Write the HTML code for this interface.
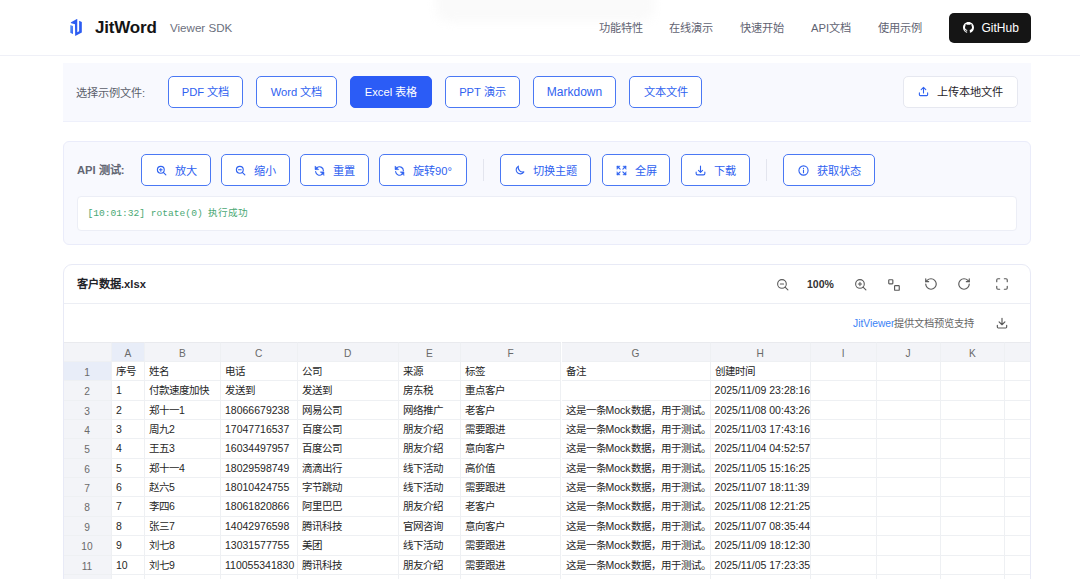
<!DOCTYPE html><html lang="zh-CN"><head><meta charset="utf-8"><style>
*{box-sizing:border-box;margin:0;padding:0}
html,body{width:1080px;height:579px;overflow:hidden;background:#fff;font-family:"Liberation Sans",sans-serif;color:#1f2329}
.a{position:absolute;white-space:nowrap}
#hdr{position:absolute;left:0;top:0;width:1080px;height:56px;border-bottom:1px solid #eff0f7;background:#fff}
.logo-t{left:95px;top:18px;font-size:17px;font-weight:bold;color:#141414;letter-spacing:-0.2px}
.logo-s{left:170px;top:20.5px;font-size:11.6px;color:#6b6f7d}
.nav{top:19.1px;font-size:11.2px;color:#5f6372}
.gh{left:949px;top:13px;width:82px;height:29.5px;background:#151515;border-radius:5px;color:#fff;font-size:12px}
.p1{left:63px;top:63px;width:968px;height:58.5px;background:#f8f9fe;border-bottom:1px solid #eef0fb}
.lbl{font-size:11.2px;color:#5b5f6b}
.btn{position:absolute;height:32px;border:1px solid #4a78f4;border-radius:5px;background:#fff;color:#2f62f0;font-size:11.2px;white-space:nowrap;display:flex;align-items:center;justify-content:center;padding-bottom:0.5px}
.btn span{position:relative}
.btn.on{background:#2b5cf6;color:#fff;border-color:#2b5cf6}
.btn svg{position:relative;flex:none}
.p2{left:63px;top:141px;width:968px;height:104px;background:#f8f9fe;border:1px solid #eaecfa;border-radius:6px}
.log{left:77px;top:196px;width:940px;height:35px;background:#fff;border:1px solid #eceef6;border-radius:4px}
.logt{left:87.5px;top:204.5px;font-family:"Liberation Mono",monospace;font-size:9.6px;color:#4aa874}
.sep{width:1px;height:22px;background:#e3e5ee}
.p3{left:63px;top:264px;width:968px;height:340px;background:#fff;border:1px solid #e8eaf6;border-radius:9px;overflow:hidden}
.ttl{left:77px;top:275px;font-size:11.2px;font-weight:bold;color:#1f2329}
.tb svg{position:absolute}
.grid{position:absolute;left:0;top:0}
.c{position:absolute;height:19.4px;border-right:1px solid #eef0f3;border-bottom:1px solid #eef0f3;font-size:10.5px;color:#262626;line-height:19px;padding-left:4px;overflow:hidden;white-space:nowrap}
.h{background:#f3f4f8;color:#6a6a6a;text-align:center;padding-left:0;font-size:10.2px}
.sel{background:#e8edf8}
</style></head><body>
<div id="hdr">
<svg class="a" style="left:64px;top:14px" width="24" height="24" viewBox="0 0 24 24">
<defs><linearGradient id="lg" x1="0" y1="0" x2="1" y2="0.6"><stop offset="0" stop-color="#6aa6f8"/><stop offset="1" stop-color="#2d5cf2"/></linearGradient></defs>
<polygon fill="url(#lg)" points="6.22,10.98 8.91,12.02 8.91,20.1 6.22,18.65"/>
<polygon fill="#2c5cf2" points="6.63,8.5 12.85,4.97 13.26,4.97 13.26,18.24 15.13,17.2 15.13,6.84 17.82,8.08 17.82,18.45 11.19,21.97 10.98,10.36 7.25,9.33"/>
</svg>
<div class="a" style="left:436px;top:-14px;width:218px;height:36px;border-radius:14px;background:#fafafa;filter:blur(5px)"></div>
<div class="a logo-t">JitWord</div><div class="a logo-s">Viewer SDK</div>
<div class="a nav" style="left:599px">功能特性</div>
<div class="a nav" style="left:669px">在线演示</div>
<div class="a nav" style="left:740px">快速开始</div>
<div class="a nav" style="left:811px">API文档</div>
<div class="a nav" style="left:878px">使用示例</div>
<div class="a gh"><svg class="a" style="left:13.5px;top:9px" width="11" height="11" viewBox="0 0 16 16"><path fill="#fff" d="M8 0C3.58 0 0 3.58 0 8c0 3.54 2.29 6.53 5.47 7.59.4.07.55-.17.55-.38 0-.19-.01-.82-.01-1.49-2.01.37-2.53-.49-2.69-.94-.09-.23-.48-.94-.82-1.13-.28-.15-.68-.52-.01-.53.63-.01 1.08.58 1.230.82.72 1.21 1.87.87 2.33.66.07-.52.28-.87.51-1.07-1.78-.2-3.64-.89-3.64-3.95 0-.87.31-1.59.82-2.15-.08-.2-.36-1.02.08-2.12 0 0 .67-.21 2.2.82.64-.18 1.32-.27 2-.27.68 0 1.36.09 2 .27 1.53-1.04 2.2-.82 2.2-.82.44 1.1.16 1.92.08 2.12.51.56.82 1.27.82 2.15 0 3.07-1.87 3.75-3.65 3.95.29.25.54.73.54 1.48 0 1.07-.01 1.93-.01 2.2 0 .21.15.46.55.38A8.013 8.013 0 0016 8c0-4.42-3.58-8-8-8z"/></svg><span class="a" style="left:32.5px;top:7.5px">GitHub</span></div>
</div>
<div class="a p1"></div>
<div class="a lbl" style="left:76px;top:84.3px">选择示例文件:</div>
<div class="btn " style="left:168px;top:76px;width:75px;height:32px;padding-bottom:1.7px;"><span>PDF 文档</span></div>
<div class="btn " style="left:256px;top:76px;width:81px;height:32px;padding-bottom:1.7px;"><span>Word 文档</span></div>
<div class="btn on" style="left:350px;top:76px;width:82px;height:32px;padding-bottom:1.7px;"><span>Excel 表格</span></div>
<div class="btn " style="left:445px;top:76px;width:75px;height:32px;padding-bottom:1.7px;"><span>PPT 演示</span></div>
<div class="btn " style="left:533px;top:76px;width:83px;height:32px;padding-bottom:0px;font-size:12px"><span>Markdown</span></div>
<div class="btn " style="left:629px;top:76px;width:73px;height:32px;padding-bottom:1.7px;"><span>文本文件</span></div>
<div class="btn " style="left:903px;top:76px;width:115px;height:32px;padding-bottom:1.2px;border-color:#e6e8f0;color:#1f2329"><svg style="margin-right:8px;top:0px" width="11" height="11" viewBox="0 0 24 24" fill="none" stroke="#2f62f0" stroke-width="2.4" stroke-linecap="round" stroke-linejoin="round"><path d="M12 15V3M7 8l5-5 5 5M3 15v4a2 2 0 0 0 2 2h14a2 2 0 0 0 2-2v-4"/></svg><span>上传本地文件</span></div>
<div class="a p2"></div>
<div class="a lbl" style="left:77px;top:161px;font-weight:bold;color:#626673">API 测试:</div>
<div class="btn " style="left:141px;top:154px;width:70px;height:32px;padding-bottom:0.5px;"><svg style="margin-right:8px;top:0.5px" width="11" height="11" viewBox="0 0 24 24" fill="none" stroke="#2f62f0" stroke-width="2.4" stroke-linecap="round" stroke-linejoin="round" ><circle cx="10.5" cy="10.5" r="7.5"/><path d="M21.5 21.5l-5.6-5.6"/><path d="M10.5 7.5v6M7.5 10.5h6"/></svg><span>放大</span></div>
<div class="btn " style="left:221px;top:154px;width:69px;height:32px;padding-bottom:0.5px;"><svg style="margin-right:8px;top:0.5px" width="11" height="11" viewBox="0 0 24 24" fill="none" stroke="#2f62f0" stroke-width="2.4" stroke-linecap="round" stroke-linejoin="round" ><circle cx="10.5" cy="10.5" r="7.5"/><path d="M21.5 21.5l-5.6-5.6"/><path d="M7.5 10.5h6"/></svg><span>缩小</span></div>
<div class="btn " style="left:300px;top:154px;width:69px;height:32px;padding-bottom:0.5px;"><svg style="margin-right:8px;top:0.5px" width="11" height="11" viewBox="0 0 24 24" fill="none" stroke="#2f62f0" stroke-width="2.4" stroke-linecap="round" stroke-linejoin="round" ><path d="M20.5 12.5A8.5 8.5 0 0 0 6.2 6.2L3.5 9"/><path d="M2.5 3v7h7z" fill="#2f62f0" stroke-width="1.5"/><path d="M3.5 14.5A8.5 8.5 0 0 0 17.8 19.8L20.5 17"/><path d="M21.5 22v-7h-7z" fill="#2f62f0" stroke-width="1.5"/></svg><span>重置</span></div>
<div class="btn " style="left:379px;top:154px;width:88px;height:32px;padding-bottom:0.5px;"><svg style="margin-right:8px;top:0.5px" width="11" height="11" viewBox="0 0 24 24" fill="none" stroke="#2f62f0" stroke-width="2.4" stroke-linecap="round" stroke-linejoin="round" ><path d="M20.5 12.5A8.5 8.5 0 0 0 6.2 6.2L3.5 9"/><path d="M2.5 3v7h7z" fill="#2f62f0" stroke-width="1.5"/><path d="M3.5 14.5A8.5 8.5 0 0 0 17.8 19.8L20.5 17"/><path d="M21.5 22v-7h-7z" fill="#2f62f0" stroke-width="1.5"/></svg><span>旋转90°</span></div>
<div class="a sep" style="left:483px;top:159px"></div>
<div class="btn " style="left:500px;top:154px;width:91px;height:32px;padding-bottom:0.5px;"><svg style="margin-right:8px;top:0.5px" width="11" height="11" viewBox="0 0 24 24" fill="none" stroke="#2f62f0" stroke-width="2.4" stroke-linecap="round" stroke-linejoin="round" ><path d="M9.5 2.5A9 9 0 1 0 21.5 15 10 10 0 0 1 9.5 2.5z"/></svg><span>切换主题</span></div>
<div class="btn " style="left:602px;top:154px;width:68px;height:32px;padding-bottom:0.5px;"><svg style="margin-right:8px;top:0.5px" width="11" height="11" viewBox="0 0 24 24" fill="none" stroke="#2f62f0" stroke-width="2.4" stroke-linecap="round" stroke-linejoin="round" ><path d="M3 3l6 6" /><path d="M2.5 2.5h6.5l-6.5 6.5z" fill="#2f62f0" stroke-width="1"/><path d="M21 3l-6 6"/><path d="M21.5 2.5h-6.5l6.5 6.5z" fill="#2f62f0" stroke-width="1"/><path d="M3 21l6-6"/><path d="M2.5 21.5h6.5l-6.5-6.5z" fill="#2f62f0" stroke-width="1"/><path d="M21 21l-6-6"/><path d="M21.5 21.5h-6.5l6.5-6.5z" fill="#2f62f0" stroke-width="1"/></svg><span>全屏</span></div>
<div class="btn " style="left:681px;top:154px;width:69px;height:32px;padding-bottom:0.5px;"><svg style="margin-right:8px;top:0.5px" width="11" height="11" viewBox="0 0 24 24" fill="none" stroke="#2f62f0" stroke-width="2.4" stroke-linecap="round" stroke-linejoin="round" ><path d="M12 2.5v13M7.5 11.5l4.5 4.5 4.5-4.5"/><path d="M2.5 15.5v3a3 3 0 0 0 3 3h13a3 3 0 0 0 3-3v-3"/></svg><span>下载</span></div>
<div class="a sep" style="left:766px;top:159px"></div>
<div class="btn " style="left:783px;top:154px;width:92px;height:32px;padding-bottom:0.5px;"><svg style="margin-right:8px;top:0.5px" width="11" height="11" viewBox="0 0 24 24" fill="none" stroke="#2f62f0" stroke-width="2.4" stroke-linecap="round" stroke-linejoin="round" ><circle cx="12" cy="12" r="10"/><path d="M12 11v6"/><path d="M12 7.3v.4"/></svg><span>获取状态</span></div>
<div class="a log"></div>
<div class="a logt">[10:01:32] rotate(0) 执行成功</div>
<div class="a p3">
</div>
<div class="a ttl">客户数据.xlsx</div>
<svg class="a" style="left:775.5px;top:277.5px" width="13" height="13" viewBox="0 0 24 24" fill="none" stroke="#5a5a5a" stroke-width="2" stroke-linecap="round" stroke-linejoin="round"><circle cx="11" cy="11" r="8"/><path d="M22 22l-5.3-5.3M8 11h6"/></svg>
<div class="a" style="left:807px;top:278px;font-size:10.5px;font-weight:bold;color:#333">100%</div>
<svg class="a" style="left:853.5px;top:277.5px" width="13" height="13" viewBox="0 0 24 24" fill="none" stroke="#5a5a5a" stroke-width="2" stroke-linecap="round" stroke-linejoin="round"><circle cx="11" cy="11" r="8"/><path d="M22 22l-5.3-5.3M8 11h6M11 8v6"/></svg>
<svg class="a" style="left:886.5px;top:277.5px" width="14" height="14" viewBox="0 0 24 24" fill="none" stroke="#5a5a5a" stroke-width="2" stroke-linecap="round" stroke-linejoin="round"><rect x="3" y="3" width="7" height="7" rx="1"/><rect x="13" y="13" width="8" height="8" rx="1"/></svg>
<svg class="a" style="left:924px;top:277px" width="14" height="14" viewBox="0 0 24 24" fill="none" stroke="#5a5a5a" stroke-width="2" stroke-linecap="round" stroke-linejoin="round"><path d="M3 12a9 9 0 1 0 9-9 9.75 9.75 0 0 0-6.74 2.74L3 8"/><path d="M3 3v5h5"/></svg>
<svg class="a" style="left:957px;top:277px" width="14" height="14" viewBox="0 0 24 24" fill="none" stroke="#5a5a5a" stroke-width="2" stroke-linecap="round" stroke-linejoin="round"><path d="M21 12a9 9 0 1 1-9-9c2.52 0 4.93 1 6.74 2.74L21 8"/><path d="M21 3v5h-5"/></svg>
<svg class="a" style="left:995px;top:277px" width="14" height="14" viewBox="0 0 24 24" fill="none" stroke="#5a5a5a" stroke-width="2" stroke-linecap="round" stroke-linejoin="round"><path d="M8 3H5a2 2 0 0 0-2 2v3M21 8V5a2 2 0 0 0-2-2h-3M3 16v3a2 2 0 0 0 2 2h3M16 21h3a2 2 0 0 0 2-2v-3"/></svg>
<div class="a" style="left:64px;top:303px;width:966px;height:1px;background:#eceef4"></div>
<div class="a" style="left:853px;top:315px;font-size:10.25px;color:#666"><span style="color:#3b82f6">JitViewer</span>提供文档预览支持</div>
<svg class="a" style="left:995px;top:316px" width="14" height="14" viewBox="0 0 24 24" fill="none" stroke="#5a5a5a" stroke-width="2" stroke-linecap="round" stroke-linejoin="round"><path d="M12 4v11M7 10l5 5 5-5M4 16v3a1.5 1.5 0 0 0 1.5 1.5h13A1.5 1.5 0 0 0 20 19v-3"/></svg>
<div class="a" style="left:64px;top:342px;width:966px;height:240px;overflow:hidden"><div class="grid" style="left:-64px;top:-342px">
<div class="c h" style="left:63px;top:342px;width:49px;height:20px;line-height:22px;border-top:1px solid #e9eaee"></div>
<div class="c h sel" style="left:112px;top:342px;width:33px;height:20px;line-height:22px;border-top:1px solid #e9eaee">A</div>
<div class="c h" style="left:145px;top:342px;width:76px;height:20px;line-height:22px;border-top:1px solid #e9eaee">B</div>
<div class="c h" style="left:221px;top:342px;width:76.5px;height:20px;line-height:22px;border-top:1px solid #e9eaee">C</div>
<div class="c h" style="left:297.5px;top:342px;width:101.5px;height:20px;line-height:22px;border-top:1px solid #e9eaee">D</div>
<div class="c h" style="left:399px;top:342px;width:61.60000000000002px;height:20px;line-height:22px;border-top:1px solid #e9eaee">E</div>
<div class="c h" style="left:460.6px;top:342px;width:100.89999999999998px;height:20px;line-height:22px;border-top:1px solid #e9eaee">F</div>
<div class="c h" style="left:561.5px;top:342px;width:149.10000000000002px;height:20px;line-height:22px;border-top:1px solid #e9eaee">G</div>
<div class="c h" style="left:710.6px;top:342px;width:100.39999999999998px;height:20px;line-height:22px;border-top:1px solid #e9eaee">H</div>
<div class="c h" style="left:811px;top:342px;width:65.5px;height:20px;line-height:22px;border-top:1px solid #e9eaee">I</div>
<div class="c h" style="left:876.5px;top:342px;width:64.0px;height:20px;line-height:22px;border-top:1px solid #e9eaee">J</div>
<div class="c h" style="left:940.5px;top:342px;width:64.79999999999995px;height:20px;line-height:22px;border-top:1px solid #e9eaee">K</div>
<div class="c h" style="left:1005.3px;top:342px;width:64.70000000000005px;height:20px;line-height:22px;border-top:1px solid #e9eaee"></div>
<div class="c h sel" style="left:63px;top:362.0px;width:49px;line-height:21px">1</div>
<div class="c" style="left:112px;top:362.0px;width:33px">序号</div>
<div class="c" style="left:145px;top:362.0px;width:76px">姓名</div>
<div class="c" style="left:221px;top:362.0px;width:76.5px">电话</div>
<div class="c" style="left:297.5px;top:362.0px;width:101.5px">公司</div>
<div class="c" style="left:399px;top:362.0px;width:61.60000000000002px">来源</div>
<div class="c" style="left:460.6px;top:362.0px;width:100.89999999999998px">标签</div>
<div class="c" style="left:561.5px;top:362.0px;width:149.10000000000002px">备注</div>
<div class="c" style="left:710.6px;top:362.0px;width:100.39999999999998px">创建时间</div>
<div class="c" style="left:811px;top:362.0px;width:65.5px"></div>
<div class="c" style="left:876.5px;top:362.0px;width:64.0px"></div>
<div class="c" style="left:940.5px;top:362.0px;width:64.79999999999995px"></div>
<div class="c" style="left:1005.3px;top:362.0px;width:64.70000000000005px"></div>
<div class="c h" style="left:63px;top:381.35px;width:49px;line-height:21px">2</div>
<div class="c" style="left:112px;top:381.35px;width:33px">1</div>
<div class="c" style="left:145px;top:381.35px;width:76px">付款速度加快</div>
<div class="c" style="left:221px;top:381.35px;width:76.5px">发送到</div>
<div class="c" style="left:297.5px;top:381.35px;width:101.5px">发送到</div>
<div class="c" style="left:399px;top:381.35px;width:61.60000000000002px">房东税</div>
<div class="c" style="left:460.6px;top:381.35px;width:100.89999999999998px">重点客户</div>
<div class="c" style="left:561.5px;top:381.35px;width:149.10000000000002px"></div>
<div class="c" style="left:710.6px;top:381.35px;width:100.39999999999998px">2025/11/09 23:28:16</div>
<div class="c" style="left:811px;top:381.35px;width:65.5px"></div>
<div class="c" style="left:876.5px;top:381.35px;width:64.0px"></div>
<div class="c" style="left:940.5px;top:381.35px;width:64.79999999999995px"></div>
<div class="c" style="left:1005.3px;top:381.35px;width:64.70000000000005px"></div>
<div class="c h" style="left:63px;top:400.7px;width:49px;line-height:21px">3</div>
<div class="c" style="left:112px;top:400.7px;width:33px">2</div>
<div class="c" style="left:145px;top:400.7px;width:76px">郑十一1</div>
<div class="c" style="left:221px;top:400.7px;width:76.5px">18066679238</div>
<div class="c" style="left:297.5px;top:400.7px;width:101.5px">网易公司</div>
<div class="c" style="left:399px;top:400.7px;width:61.60000000000002px">网络推广</div>
<div class="c" style="left:460.6px;top:400.7px;width:100.89999999999998px">老客户</div>
<div class="c" style="left:561.5px;top:400.7px;width:149.10000000000002px">这是一条Mock数据，用于测试。</div>
<div class="c" style="left:710.6px;top:400.7px;width:100.39999999999998px">2025/11/08 00:43:26</div>
<div class="c" style="left:811px;top:400.7px;width:65.5px"></div>
<div class="c" style="left:876.5px;top:400.7px;width:64.0px"></div>
<div class="c" style="left:940.5px;top:400.7px;width:64.79999999999995px"></div>
<div class="c" style="left:1005.3px;top:400.7px;width:64.70000000000005px"></div>
<div class="c h" style="left:63px;top:420.05px;width:49px;line-height:21px">4</div>
<div class="c" style="left:112px;top:420.05px;width:33px">3</div>
<div class="c" style="left:145px;top:420.05px;width:76px">周九2</div>
<div class="c" style="left:221px;top:420.05px;width:76.5px">17047716537</div>
<div class="c" style="left:297.5px;top:420.05px;width:101.5px">百度公司</div>
<div class="c" style="left:399px;top:420.05px;width:61.60000000000002px">朋友介绍</div>
<div class="c" style="left:460.6px;top:420.05px;width:100.89999999999998px">需要跟进</div>
<div class="c" style="left:561.5px;top:420.05px;width:149.10000000000002px">这是一条Mock数据，用于测试。</div>
<div class="c" style="left:710.6px;top:420.05px;width:100.39999999999998px">2025/11/03 17:43:16</div>
<div class="c" style="left:811px;top:420.05px;width:65.5px"></div>
<div class="c" style="left:876.5px;top:420.05px;width:64.0px"></div>
<div class="c" style="left:940.5px;top:420.05px;width:64.79999999999995px"></div>
<div class="c" style="left:1005.3px;top:420.05px;width:64.70000000000005px"></div>
<div class="c h" style="left:63px;top:439.4px;width:49px;line-height:21px">5</div>
<div class="c" style="left:112px;top:439.4px;width:33px">4</div>
<div class="c" style="left:145px;top:439.4px;width:76px">王五3</div>
<div class="c" style="left:221px;top:439.4px;width:76.5px">16034497957</div>
<div class="c" style="left:297.5px;top:439.4px;width:101.5px">百度公司</div>
<div class="c" style="left:399px;top:439.4px;width:61.60000000000002px">朋友介绍</div>
<div class="c" style="left:460.6px;top:439.4px;width:100.89999999999998px">意向客户</div>
<div class="c" style="left:561.5px;top:439.4px;width:149.10000000000002px">这是一条Mock数据，用于测试。</div>
<div class="c" style="left:710.6px;top:439.4px;width:100.39999999999998px">2025/11/04 04:52:57</div>
<div class="c" style="left:811px;top:439.4px;width:65.5px"></div>
<div class="c" style="left:876.5px;top:439.4px;width:64.0px"></div>
<div class="c" style="left:940.5px;top:439.4px;width:64.79999999999995px"></div>
<div class="c" style="left:1005.3px;top:439.4px;width:64.70000000000005px"></div>
<div class="c h" style="left:63px;top:458.75px;width:49px;line-height:21px">6</div>
<div class="c" style="left:112px;top:458.75px;width:33px">5</div>
<div class="c" style="left:145px;top:458.75px;width:76px">郑十一4</div>
<div class="c" style="left:221px;top:458.75px;width:76.5px">18029598749</div>
<div class="c" style="left:297.5px;top:458.75px;width:101.5px">滴滴出行</div>
<div class="c" style="left:399px;top:458.75px;width:61.60000000000002px">线下活动</div>
<div class="c" style="left:460.6px;top:458.75px;width:100.89999999999998px">高价值</div>
<div class="c" style="left:561.5px;top:458.75px;width:149.10000000000002px">这是一条Mock数据，用于测试。</div>
<div class="c" style="left:710.6px;top:458.75px;width:100.39999999999998px">2025/11/05 15:16:25</div>
<div class="c" style="left:811px;top:458.75px;width:65.5px"></div>
<div class="c" style="left:876.5px;top:458.75px;width:64.0px"></div>
<div class="c" style="left:940.5px;top:458.75px;width:64.79999999999995px"></div>
<div class="c" style="left:1005.3px;top:458.75px;width:64.70000000000005px"></div>
<div class="c h" style="left:63px;top:478.1px;width:49px;line-height:21px">7</div>
<div class="c" style="left:112px;top:478.1px;width:33px">6</div>
<div class="c" style="left:145px;top:478.1px;width:76px">赵六5</div>
<div class="c" style="left:221px;top:478.1px;width:76.5px">18010424755</div>
<div class="c" style="left:297.5px;top:478.1px;width:101.5px">字节跳动</div>
<div class="c" style="left:399px;top:478.1px;width:61.60000000000002px">线下活动</div>
<div class="c" style="left:460.6px;top:478.1px;width:100.89999999999998px">需要跟进</div>
<div class="c" style="left:561.5px;top:478.1px;width:149.10000000000002px">这是一条Mock数据，用于测试。</div>
<div class="c" style="left:710.6px;top:478.1px;width:100.39999999999998px">2025/11/07 18:11:39</div>
<div class="c" style="left:811px;top:478.1px;width:65.5px"></div>
<div class="c" style="left:876.5px;top:478.1px;width:64.0px"></div>
<div class="c" style="left:940.5px;top:478.1px;width:64.79999999999995px"></div>
<div class="c" style="left:1005.3px;top:478.1px;width:64.70000000000005px"></div>
<div class="c h" style="left:63px;top:497.45000000000005px;width:49px;line-height:21px">8</div>
<div class="c" style="left:112px;top:497.45000000000005px;width:33px">7</div>
<div class="c" style="left:145px;top:497.45000000000005px;width:76px">李四6</div>
<div class="c" style="left:221px;top:497.45000000000005px;width:76.5px">18061820866</div>
<div class="c" style="left:297.5px;top:497.45000000000005px;width:101.5px">阿里巴巴</div>
<div class="c" style="left:399px;top:497.45000000000005px;width:61.60000000000002px">朋友介绍</div>
<div class="c" style="left:460.6px;top:497.45000000000005px;width:100.89999999999998px">老客户</div>
<div class="c" style="left:561.5px;top:497.45000000000005px;width:149.10000000000002px">这是一条Mock数据，用于测试。</div>
<div class="c" style="left:710.6px;top:497.45000000000005px;width:100.39999999999998px">2025/11/08 12:21:25</div>
<div class="c" style="left:811px;top:497.45000000000005px;width:65.5px"></div>
<div class="c" style="left:876.5px;top:497.45000000000005px;width:64.0px"></div>
<div class="c" style="left:940.5px;top:497.45000000000005px;width:64.79999999999995px"></div>
<div class="c" style="left:1005.3px;top:497.45000000000005px;width:64.70000000000005px"></div>
<div class="c h" style="left:63px;top:516.8px;width:49px;line-height:21px">9</div>
<div class="c" style="left:112px;top:516.8px;width:33px">8</div>
<div class="c" style="left:145px;top:516.8px;width:76px">张三7</div>
<div class="c" style="left:221px;top:516.8px;width:76.5px">14042976598</div>
<div class="c" style="left:297.5px;top:516.8px;width:101.5px">腾讯科技</div>
<div class="c" style="left:399px;top:516.8px;width:61.60000000000002px">官网咨询</div>
<div class="c" style="left:460.6px;top:516.8px;width:100.89999999999998px">意向客户</div>
<div class="c" style="left:561.5px;top:516.8px;width:149.10000000000002px">这是一条Mock数据，用于测试。</div>
<div class="c" style="left:710.6px;top:516.8px;width:100.39999999999998px">2025/11/07 08:35:44</div>
<div class="c" style="left:811px;top:516.8px;width:65.5px"></div>
<div class="c" style="left:876.5px;top:516.8px;width:64.0px"></div>
<div class="c" style="left:940.5px;top:516.8px;width:64.79999999999995px"></div>
<div class="c" style="left:1005.3px;top:516.8px;width:64.70000000000005px"></div>
<div class="c h" style="left:63px;top:536.15px;width:49px;line-height:21px">10</div>
<div class="c" style="left:112px;top:536.15px;width:33px">9</div>
<div class="c" style="left:145px;top:536.15px;width:76px">刘七8</div>
<div class="c" style="left:221px;top:536.15px;width:76.5px">13031577755</div>
<div class="c" style="left:297.5px;top:536.15px;width:101.5px">美团</div>
<div class="c" style="left:399px;top:536.15px;width:61.60000000000002px">线下活动</div>
<div class="c" style="left:460.6px;top:536.15px;width:100.89999999999998px">需要跟进</div>
<div class="c" style="left:561.5px;top:536.15px;width:149.10000000000002px">这是一条Mock数据，用于测试。</div>
<div class="c" style="left:710.6px;top:536.15px;width:100.39999999999998px">2025/11/09 18:12:30</div>
<div class="c" style="left:811px;top:536.15px;width:65.5px"></div>
<div class="c" style="left:876.5px;top:536.15px;width:64.0px"></div>
<div class="c" style="left:940.5px;top:536.15px;width:64.79999999999995px"></div>
<div class="c" style="left:1005.3px;top:536.15px;width:64.70000000000005px"></div>
<div class="c h" style="left:63px;top:555.5px;width:49px;line-height:21px">11</div>
<div class="c" style="left:112px;top:555.5px;width:33px">10</div>
<div class="c" style="left:145px;top:555.5px;width:76px">刘七9</div>
<div class="c" style="left:221px;top:555.5px;width:76.5px">110055341830</div>
<div class="c" style="left:297.5px;top:555.5px;width:101.5px">腾讯科技</div>
<div class="c" style="left:399px;top:555.5px;width:61.60000000000002px">朋友介绍</div>
<div class="c" style="left:460.6px;top:555.5px;width:100.89999999999998px">需要跟进</div>
<div class="c" style="left:561.5px;top:555.5px;width:149.10000000000002px">这是一条Mock数据，用于测试。</div>
<div class="c" style="left:710.6px;top:555.5px;width:100.39999999999998px">2025/11/05 17:23:35</div>
<div class="c" style="left:811px;top:555.5px;width:65.5px"></div>
<div class="c" style="left:876.5px;top:555.5px;width:64.0px"></div>
<div class="c" style="left:940.5px;top:555.5px;width:64.79999999999995px"></div>
<div class="c" style="left:1005.3px;top:555.5px;width:64.70000000000005px"></div>
<div class="c h" style="left:63px;top:574.85px;width:49px;line-height:21px">12</div>
<div class="c" style="left:112px;top:574.85px;width:33px"></div>
<div class="c" style="left:145px;top:574.85px;width:76px"></div>
<div class="c" style="left:221px;top:574.85px;width:76.5px"></div>
<div class="c" style="left:297.5px;top:574.85px;width:101.5px"></div>
<div class="c" style="left:399px;top:574.85px;width:61.60000000000002px"></div>
<div class="c" style="left:460.6px;top:574.85px;width:100.89999999999998px"></div>
<div class="c" style="left:561.5px;top:574.85px;width:149.10000000000002px"></div>
<div class="c" style="left:710.6px;top:574.85px;width:100.39999999999998px"></div>
<div class="c" style="left:811px;top:574.85px;width:65.5px"></div>
<div class="c" style="left:876.5px;top:574.85px;width:64.0px"></div>
<div class="c" style="left:940.5px;top:574.85px;width:64.79999999999995px"></div>
<div class="c" style="left:1005.3px;top:574.85px;width:64.70000000000005px"></div>
</div></div>
</body></html>
